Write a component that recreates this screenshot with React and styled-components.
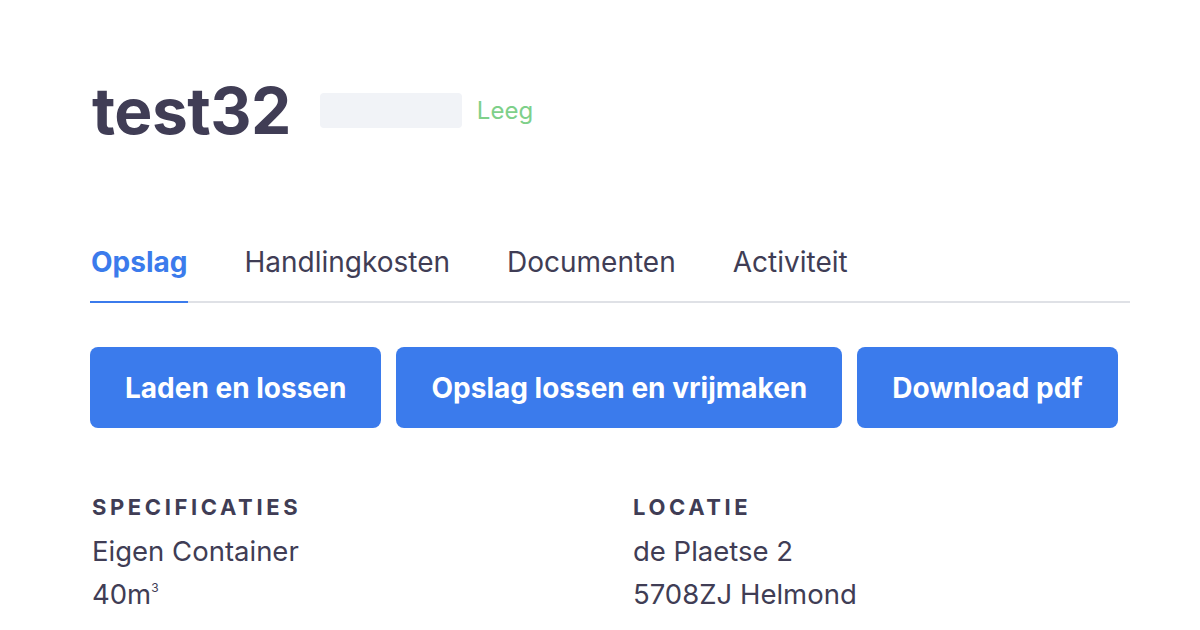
import styled, { createGlobalStyle } from "styled-components";

const GlobalStyle = createGlobalStyle`
  body {
    margin: 0;
    background: #ffffff;
    font-family: Inter, "Noto Sans", sans-serif;
    color: #403d55;
  }
`;

const tabs = ["Opslag", "Handlingkosten", "Documenten", "Activiteit"];
const actions = ["Laden en lossen", "Opslag lossen en vrijmaken", "Download pdf"];

export default function App() {
  return (
    <Page>
      <GlobalStyle />
      <Header>
        <Title>test32</Title>
        <Placeholder />
        <Status>Leeg</Status>
      </Header>

      <TabBar>
        {tabs.map((tab, i) => (
          <Tab key={tab} $active={i === 0}>
            {tab}
          </Tab>
        ))}
      </TabBar>

      <Actions>
        {actions.map((label) => (
          <Button key={label}>{label}</Button>
        ))}
      </Actions>

      <Details>
        <Section>
          <SectionTitle>Specificaties</SectionTitle>
          <Value>Eigen Container</Value>
          <Value>
            40m<sup>3</sup>
          </Value>
        </Section>
        <Section>
          <SectionTitle>Locatie</SectionTitle>
          <Value>de Plaetse 2</Value>
          <Value>5708ZJ Helmond</Value>
        </Section>
      </Details>
    </Page>
  );
}

const Page = styled.main`
  width: 1040px;
  padding: 70px 70px 0 90px;
`;

const Header = styled.div`
  display: flex;
  align-items: center;
  height: 80px;
`;

const Title = styled.h1`
  margin: 0 29px 0 2px;
  font-size: 64px;
  font-weight: 700;
  letter-spacing: -0.5px;
  color: #403d55;
`;

const Placeholder = styled.div`
  width: 142px;
  height: 35px;
  border-radius: 4px;
  background: #f1f3f7;
  margin-right: 15px;
`;

const Status = styled.span`
  font-size: 24px;
  color: #7ed08a;
`;

const TabBar = styled.nav`
  display: flex;
  gap: 55px;
  margin-top: 95px;
  border-bottom: 2px solid #dfe1e6;
`;

const Tab = styled.div`
  padding: 0 1px 22px;
  margin-bottom: -2px;
  font-size: 28px;
  font-weight: ${(p) => (p.$active ? 700 : 400)};
  color: ${(p) => (p.$active ? "#3b7bec" : "#403d55")};
  border-bottom: 2px solid ${(p) => (p.$active ? "#3b7bec" : "transparent")};
`;

const Actions = styled.div`
  display: flex;
  gap: 15px;
  margin-top: 44px;
`;

const Button = styled.button`
  height: 81px;
  padding: 0 35px;
  border: none;
  border-radius: 8px;
  background: #3b7bec;
  color: #ffffff;
  font-family: inherit;
  font-size: 28px;
  font-weight: 700;
`;

const Details = styled.div`
  display: grid;
  grid-template-columns: 541px 1fr;
  margin-top: 66px;
`;

const Section = styled.section`
  display: flex;
  flex-direction: column;
`;

const SectionTitle = styled.h2`
  margin: 0 0 10px 2px;
  font-size: 22px;
  font-weight: 700;
  letter-spacing: 3.6px;
  text-transform: uppercase;
  color: #403d55;
`;

const Value = styled.div`
  margin-left: 2px;
  font-size: 27.5px;
  line-height: 43px;

  sup {
    font-size: 12px;
    vertical-align: 12px;
    line-height: 0;
  }
`;
